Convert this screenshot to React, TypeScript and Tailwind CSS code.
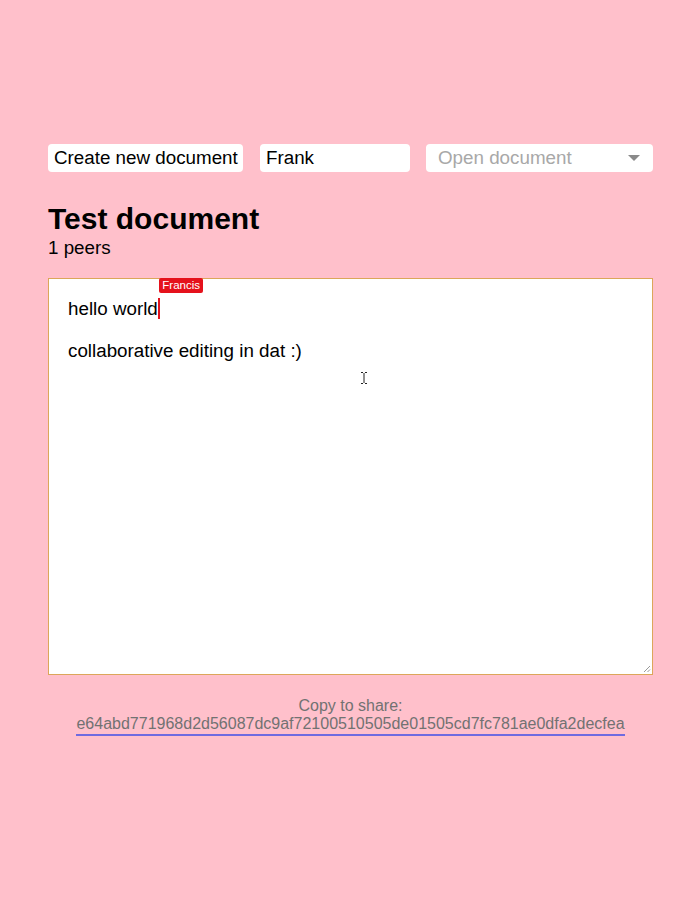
import React from "react";

const HASH = "e64abd771968d2d56087dc9af72100510505de01505cd7fc781ae0dfa2decfea";

function Toolbar() {
  return (
    <div className="flex items-center h-[28px]">
      <button className="shrink-0 h-[28px] w-[195px] bg-white rounded-[4px] px-[6px] text-left text-[18.8px] leading-[28px] text-black whitespace-nowrap">
        Create new document
      </button>
      <input
        className="shrink-0 ml-[17px] h-[28px] w-[150px] bg-white rounded-[4px] px-[6px] text-[18.8px] text-black outline-none"
        defaultValue="Frank"
      />
      <div className="ml-[16px] h-[28px] flex-1 bg-white rounded-[4px] pl-[12px] pr-[13px] flex items-center justify-between">
        <span className="text-[18.8px] text-[#a8a8a8]">Open document</span>
        <svg width="12" height="7" viewBox="0 0 12 7">
          <path d="M0 0 L12 0 L6 6 Z" fill="#8a8a8a" />
        </svg>
      </div>
    </div>
  );
}

function Editor() {
  return (
    <div className="relative mt-[20px] h-[397px] bg-white border border-[#dca65a] pl-[19px] pt-[18px] text-[18.8px] leading-[24px] text-black">
      <p>
        hello world
        <span className="relative inline-block w-[2px] h-[21px] align-[-4px] bg-[#e0141e]">
          <span className="absolute left-[1px] top-[-20px] bg-[#e5121c] text-white text-[11.5px] leading-[15px] px-[3.5px] rounded-[2px] whitespace-nowrap">
            Francis
          </span>
        </span>
      </p>
      <p className="mt-[18px]">collaborative editing in dat :)</p>

      {/* mouse cursor */}
      <svg className="absolute left-[311px] top-[93px]" width="8" height="12" viewBox="0 0 8 12">
        <path d="M1 0.5 H3 M5 0.5 H7 M4 1 V11 M1 11.5 H3 M5 11.5 H7" stroke="#222" strokeWidth="1" fill="none" />
      </svg>

      {/* resize grip */}
      <svg className="absolute right-[1px] bottom-[1px]" width="8" height="8" viewBox="0 0 8 8">
        <path d="M7 1 L1 7 M7 4.5 L4.5 7" stroke="#999" strokeWidth="1" fill="none" />
      </svg>
    </div>
  );
}

export default function App() {
  return (
    <div className="min-h-[900px] bg-[#ffc0cb] font-['Liberation_Sans',Arial,sans-serif]">
      <div className="w-[605px] ml-[48px] pt-[144px]">
        <Toolbar />
        <h1 className="mt-[30px] text-[30px] leading-[34px] font-bold text-black">Test document</h1>
        <div className="text-[18.8px] leading-[21px] mt-[1px] text-black">1 peers</div>
        <Editor />
        <div className="mt-[22px] text-center text-[16px] leading-[18.4px] text-[#727272]">
          <div>Copy to share:</div>
          <a className="inline-block border-b-2 border-[#6f6be0] leading-[18.4px]">{HASH}</a>
        </div>
      </div>
    </div>
  );
}
